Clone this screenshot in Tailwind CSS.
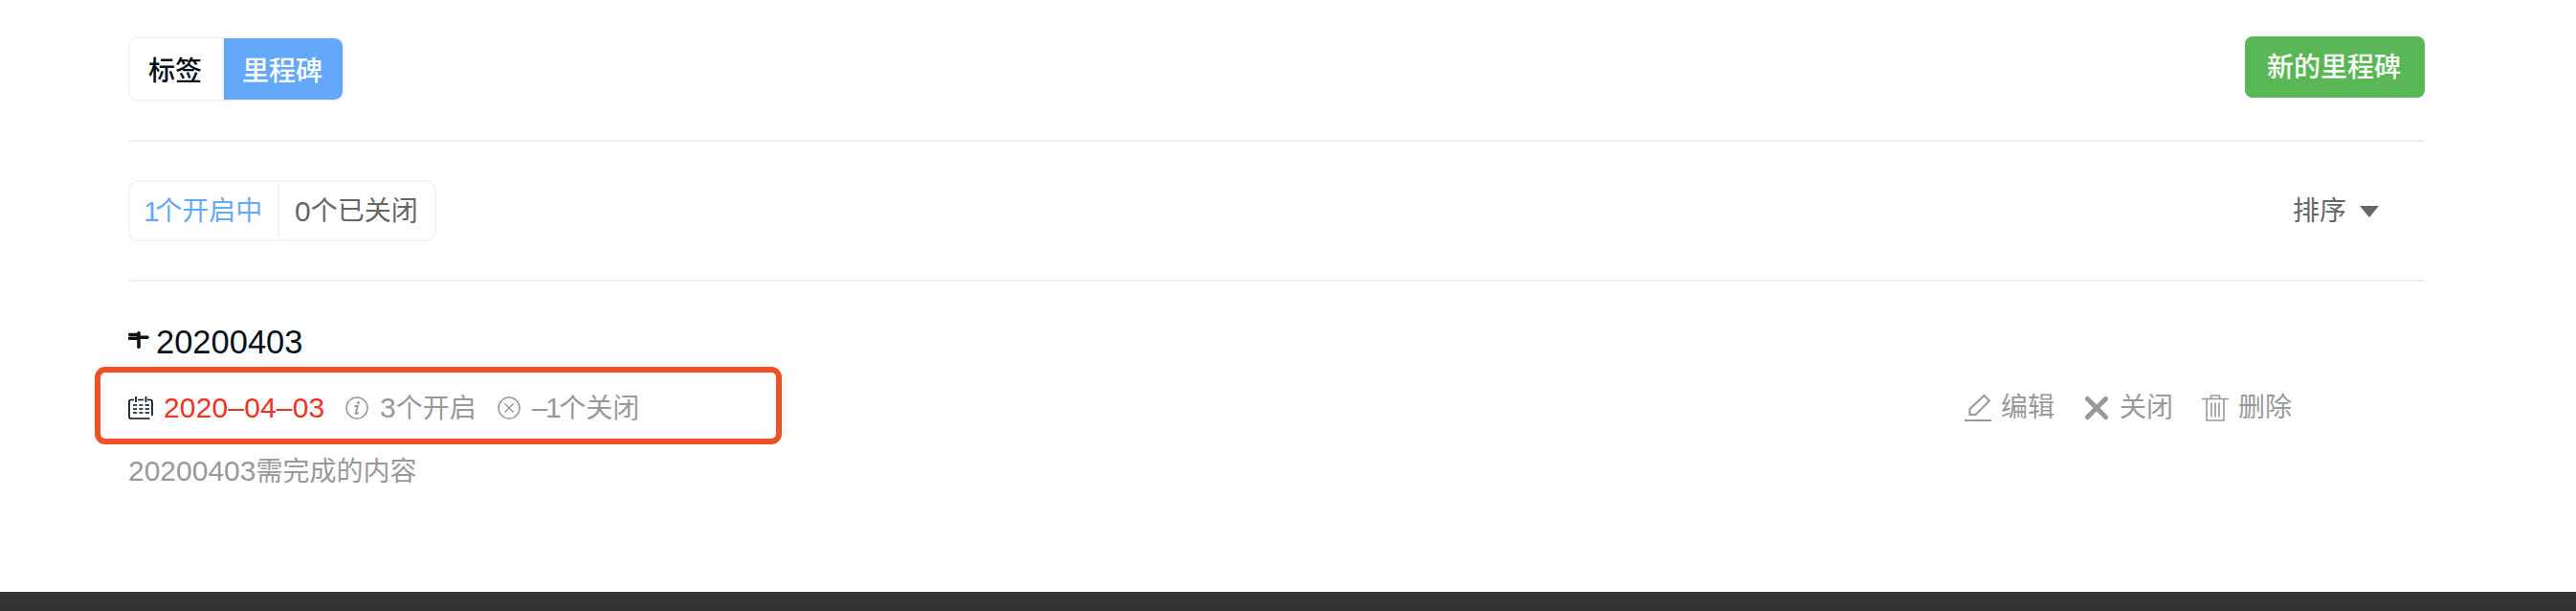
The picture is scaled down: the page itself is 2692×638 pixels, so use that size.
<!DOCTYPE html>
<html lang="zh-CN">
<head>
  <meta charset="UTF-8">
  <title>里程碑</title>
  <script src="https://cdn.jsdelivr.net/npm/@tailwindcss/browser@4"></script>
</head>
<body class="bg-white font-['Liberation_Sans','Noto_Sans_CJK_SC',sans-serif] text-[28px] leading-10 text-[#05101a]">
<div class="relative flex h-[638px] flex-col overflow-hidden">
  <main class="ml-[134px] w-[2400px] flex-1">

    <!-- tabs -->
    <div class="flex h-[148px] items-start justify-between border-b-2 border-[#eee] pt-[38px]">
      <div class="flex h-[68px] overflow-hidden rounded-[10px] border-2 border-[#f4f4f4] font-medium">
        <a href="#" class="flex w-[98px] items-center border-r-2 border-[#f4f4f4] pt-[5px] pl-[19px]">标签</a>
        <a href="#" class="flex w-[124px] items-center rounded-r-lg bg-[#64a9f9] pt-[5px] pl-[19px] text-white">里程碑</a>
      </div>
      <a href="#" class="flex h-16 w-[188px] items-center rounded-lg bg-[#5ab756] pt-px pl-[23px] font-medium text-white">新的里程碑</a>
    </div>

    <!-- filter -->
    <div class="flex h-[146px] items-start justify-between border-b-2 border-[#eee] pt-10 text-[#666]">
      <div class="flex h-16 rounded-[10px] border-2 border-[#f4f4f4]">
        <a href="#" class="flex w-[156px] items-center border-r-2 border-[#f4f4f4] pt-px pl-3.5 text-[#64a9f9]"><span class="text-[30px] tracking-[-4.5px]">1</span>个开启中</a>
        <a href="#" class="flex w-[162px] items-center pt-px pl-4"><span class="text-[30px]">0</span>个已关闭</a>
      </div>
      <div class="mr-12 flex h-16 items-center gap-3.5 pt-px">
        <span>排序</span>
        <svg class="h-3 w-5" viewBox="0 0 20 12" fill="currentColor"><path d="M0 0h20L10 12z"/></svg>
      </div>
    </div>

    <!-- milestone -->
    <div class="pt-9">
      <div class="flex h-[54px] items-center">
        <svg class="mr-[7px] h-[18px] w-[22px] -translate-y-[2px]" viewBox="0 0 22 18" fill="none" stroke="currentColor" stroke-linecap="round">
          <path d="M1.500 3.300h9" stroke-width="3.200"/>
          <path d="M1.500 7.300h9" stroke-width="3.400"/>
          <path d="M11 6.300h9" stroke-width="3.400"/>
          <path d="M11 1.800v14.400" stroke-width="3.600"/>
        </svg>
        <span class="text-[34.500px]">20200403</span>
      </div>

      <div class="mt-[22px] flex h-10 items-center text-[#999]">
        <svg class="h-6 w-[26px] text-[#05101a]" viewBox="0 0 26 24" fill="none" stroke="currentColor" stroke-width="1.700">
          <path d="M6 3.500H3Q1 3.500 1 5.500V21q0 2 2 2h19.500M25 20V5.500q0-2-2-2h-3M10 3.500h6M8 0v6M18.500 0v6"/>
          <path d="M5 9h4.200m2.200 0h4m2.200 0H22M5 13h4.200m2.200 0h4m2.200 0H22M5 17h4.200m2.200 0h4m2.200 0H22"/>
        </svg>
        <span class="ml-[11px] w-[168px] text-[30px] tracking-[0.15px] whitespace-nowrap text-[#f03226]">2020–04–03</span>
        <svg class="ml-[22px] h-6 w-6" viewBox="0 0 24 24" fill="none" stroke="currentColor" stroke-width="1.500">
          <circle cx="12" cy="12" r="11"/>
          <path d="M9.500 10h3.200l-2 7.500q0 1.500 3-.8" stroke-width="1.900"/>
          <circle cx="13.500" cy="6.500" r="1.500" fill="currentColor" stroke="none"/>
        </svg>
        <span class="ml-3"><span class="text-[30px]">3</span>个开启</span>
        <svg class="ml-[22px] h-6 w-6" viewBox="0 0 24 24" fill="none" stroke="currentColor" stroke-width="1.500">
          <circle cx="12" cy="12" r="11"/>
          <path d="M7.500 7.500l9 9M16.500 7.500l-9 9"/>
        </svg>
        <span class="ml-3"><span class="text-[30px] tracking-[-2.4px]">–1</span>个关闭</span>

        <div class="mr-[139px] ml-auto flex items-center">
          <svg class="h-[30px] w-7" viewBox="0 0 28 30" fill="none" stroke="currentColor" stroke-width="2">
            <path d="M20.500 2L26 7.500 11.500 22H5.500v-6z"/>
            <path d="M0 28h28"/>
          </svg>
          <span class="ml-2.5">编辑</span>
          <svg class="ml-[31px] h-[26px] w-[26px]" viewBox="0 0 26 26" fill="none" stroke="currentColor" stroke-width="5" stroke-linecap="round">
            <path d="M3.500 3.500l19 19M22.500 3.500l-19 19"/>
          </svg>
          <span class="ml-[11px]">关闭</span>
          <svg class="ml-[30px] h-7 w-7" viewBox="0 0 28 28" fill="none" stroke="currentColor" stroke-width="1.600">
            <path d="M0 4.500h28M9.500 4V1.500Q9.500 1 10 1h8q.5 0 .5.500V4M5 5v22h18V5M10 8.500v15M14 8.500v15M18 8.500v15"/>
          </svg>
          <span class="ml-2.5">删除</span>
        </div>
      </div>

      <div class="mt-[26px] text-[#999]"><span class="text-[30px]">20200403</span>需完成的内容</div>
    </div>
  </main>

  <!-- highlight over the meta row -->
  <div class="absolute top-[383px] left-[99px] h-[81px] w-[718px] rounded-[11px] border-6 border-[#f05024]"></div>

  <footer class="h-5 border-b border-[#3a2d33] bg-[#333]"></footer>
</div>
</body>
</html>
